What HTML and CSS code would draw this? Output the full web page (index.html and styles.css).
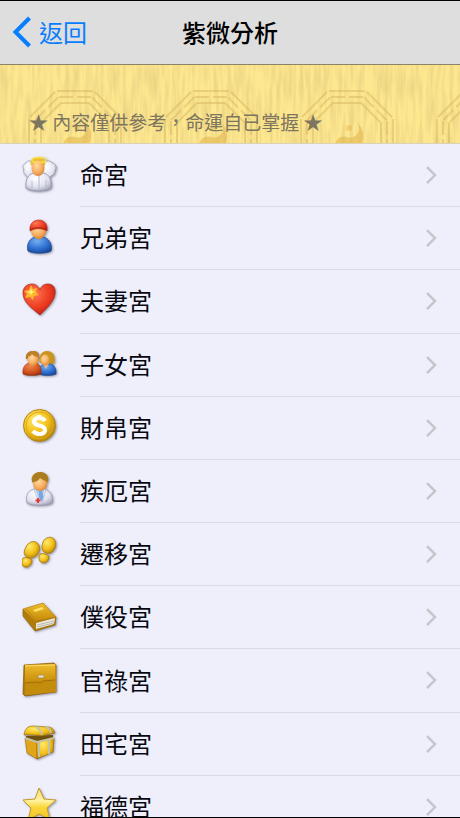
FILE: index.html
```html
<!DOCTYPE html>
<html lang="zh-Hant">
<head>
<meta charset="utf-8">
<meta name="viewport" content="width=device-width, initial-scale=1">
<title>紫微分析</title>
<link rel="stylesheet" href="styles.css">
</head>
<body>
<div class="screen">
  <header class="navbar">
    <a class="back" href="#">
      <svg class="back-arrow" viewBox="0 0 20 32" aria-hidden="true"><path d="M17.500 2 3.500 16l14 14" fill="none" stroke="currentColor" stroke-width="4"/></svg>
      <span>返回</span>
    </a>
    <h1 class="title">紫微分析</h1>
  </header>

  <div class="banner">
    <svg class="texture" aria-hidden="true">
      <defs>
        <filter id="grain" x="0" y="0" width="100%" height="100%">
          <feTurbulence type="fractalNoise" baseFrequency="0.26 0.03" numOctaves="2" seed="8"/>
          <feColorMatrix values="0 0 0 0 0.8  0 0 0 0 0.62  0 0 0 0 0.22  1.7 0 0 0 -0.62"/>
        </filter>
        <pattern id="bagua" width="136" height="160" patternUnits="userSpaceOnUse" x="7" y="-8">
          <g fill="none" stroke="#cfae55" stroke-opacity=".42" stroke-width="2" transform="translate(68 80)">
            <g id="side"><path d="M-18-46H18M-16-40H-2M2-40H16M-14-34H14"/></g>
            <use href="#side" transform="rotate(45)"/><use href="#side" transform="rotate(90)"/>
            <use href="#side" transform="rotate(135)"/><use href="#side" transform="rotate(180)"/>
            <use href="#side" transform="rotate(225)"/><use href="#side" transform="rotate(270)"/>
            <use href="#side" transform="rotate(315)"/>
            <path d="M8-16A18 18 0 0 1-8 16 9 9 0 0 1 0 0 9 9 0 0 0 8-16Z" fill="#dca83c" fill-opacity=".45" stroke="none"/>
            <circle cx="2" cy="-9" r="3" fill="#e0b040" fill-opacity=".4" stroke="none"/>
          </g>
        </pattern>
      </defs>
      <rect width="100%" height="100%" filter="url(#grain)"/>
      <rect width="100%" height="100%" fill="url(#bagua)"/>
    </svg>
    <p class="notice">★ 內容僅供參考，命運自已掌握 ★</p>
  </div>

  <svg class="defs" width="0" height="0" aria-hidden="true">
    <defs>
      <radialGradient id="skin" cx=".4" cy=".35" r=".7"><stop offset="0" stop-color="#ffd9a0"/><stop offset=".6" stop-color="#f6ae62"/><stop offset="1" stop-color="#d98432"/></radialGradient>
      <radialGradient id="white" cx=".4" cy=".3" r=".8"><stop offset="0" stop-color="#fff"/><stop offset=".6" stop-color="#e0e1ee"/><stop offset="1" stop-color="#9c9fb5"/></radialGradient>
      <radialGradient id="blue" cx=".4" cy=".25" r=".8"><stop offset="0" stop-color="#75aff0"/><stop offset=".6" stop-color="#2d6fd0"/><stop offset="1" stop-color="#164696"/></radialGradient>
      <radialGradient id="red" cx=".35" cy=".3" r=".8"><stop offset="0" stop-color="#ff7854"/><stop offset=".6" stop-color="#ec3a20"/><stop offset="1" stop-color="#b91c10"/></radialGradient>
      <radialGradient id="orange" cx=".4" cy=".25" r=".8"><stop offset="0" stop-color="#ee874c"/><stop offset=".6" stop-color="#d4541f"/><stop offset="1" stop-color="#9a3010"/></radialGradient>
      <radialGradient id="gold" cx=".35" cy=".3" r=".8"><stop offset="0" stop-color="#ffea6a"/><stop offset=".55" stop-color="#f2bf1a"/><stop offset="1" stop-color="#a97806"/></radialGradient>
      <linearGradient id="case" x1="0" y1="0" x2="0" y2="1"><stop offset="0" stop-color="#efbd2c"/><stop offset="1" stop-color="#c58a0a"/></linearGradient>
      <linearGradient id="star" x1="0" y1="0" x2="0" y2="1"><stop offset="0" stop-color="#f9dc70"/><stop offset=".4" stop-color="#fff2a0"/><stop offset=".6" stop-color="#fbd73a"/><stop offset="1" stop-color="#f2c224"/></linearGradient>
      <path id="chevron" d="M2 2l8 8-8 8" fill="none" stroke="#c5c5cb" stroke-width="2.500"/>
    </defs>
  </svg>

  <nav class="list" aria-label="紫微分析">
    <a class="row" href="#">
      <svg class="icon" viewBox="0 0 36 36" aria-hidden="true">
        <path d="M12 9C10 4 5 4 4 7c-3 1-4 4-2 6-1 3 0 5 2 6 1 4 5 5 9 5z" fill="url(#white)" stroke="#9da0b3" stroke-width=".8"/>
        <path d="M20 9c3-5 8-5 10-2 4 1 5 5 3 7 0 4-2 5-4 6-2 4-6 5-10 4z" fill="url(#white)" stroke="#9da0b3" stroke-width=".8"/>
        <path d="M4 32c-1-8 2-14 8-15h9c7 1 9 8 8 15-5 4-20 4-25 0z" fill="url(#white)" stroke="#9093a8" stroke-width=".8"/>
        <path d="M10 25v7M24 24v8M17 20v14" stroke="#b7bace" stroke-width="1"/>
        <ellipse cx="16" cy="7" rx="7.500" ry="5.500" fill="#e9c02f"/>
        <ellipse cx="16" cy="12" rx="6.500" ry="8" fill="url(#skin)"/>
        <ellipse cx="17" cy="4" rx="7" ry="2.500" fill="none" stroke="#f9df50" stroke-width="1.500"/>
      </svg>
      <span class="label">命宮</span>
      <svg class="chevron" viewBox="0 0 12 20" aria-hidden="true"><use href="#chevron"/></svg>
    </a>
    <a class="row" href="#">
      <svg class="icon" viewBox="0 0 36 36" aria-hidden="true">
        <path d="M6 32c-2-7 2-13 7-14h8c6 1 10 8 8 14-5 3-18 3-23 0z" fill="url(#blue)" stroke="#1b458c" stroke-width=".7"/>
        <path d="M13 18q4 5 8 0l-1-3h-6z" fill="#d98537"/>
        <ellipse cx="16.500" cy="12" rx="7.500" ry="7.500" fill="url(#skin)"/>
        <path d="M8 12C7 4 12 1 17 1c6 0 9 5 8 11-5-3-12-3-17 0z" fill="url(#red)" stroke="#ae2410" stroke-width=".5"/>
        <path d="M9 11c4-3 11-3 15 0" fill="none" stroke="#a52c12" stroke-width="1"/>
      </svg>
      <span class="label">兄弟宮</span>
      <svg class="chevron" viewBox="0 0 12 20" aria-hidden="true"><use href="#chevron"/></svg>
    </a>
    <a class="row" href="#">
      <svg class="icon" viewBox="0 0 36 36" aria-hidden="true">
        <path d="M18 33C11 27 1 21 1 11 1 5 5 2 10 2c4 0 7 3 8 6 1-4 4-6 8-6 5 0 8 4 7 10-1 8-9 15-15 21z" fill="url(#red)" stroke="#a82818" stroke-width=".7"/>
        <path d="M9 3l2 4 4-1-1 4 3 3-5 1-1 4-3-3-5 1 2-4-3-3 5-1z" fill="#ffb72c"/>
        <path d="M9 6l1 3 3 1-3 1-1 3-1-3-3-1 3-1z" fill="#fff07c"/>
      </svg>
      <span class="label">夫妻宮</span>
      <svg class="chevron" viewBox="0 0 12 20" aria-hidden="true"><use href="#chevron"/></svg>
    </a>
    <a class="row" href="#">
      <svg class="icon" viewBox="0 0 36 36" aria-hidden="true">
        <path d="M18 18c-2-6 1-12 7-12 7 0 9 7 7 13z" fill="#c9951d"/>
        <path d="M17 29c-1-6 2-10 6-10h5c4 0 7 5 6 10-4 2-13 2-17 0z" fill="url(#blue)" stroke="#1b458c" stroke-width=".5"/>
        <path d="M21 18l3 6 3-6z" fill="#f4b878"/>
        <ellipse cx="23" cy="15" rx="4.500" ry="5.500" fill="url(#skin)"/>
        <path d="M1 29c-1-6 2-10 6-11h7c4 1 6 6 5 11-4 2-14 2-18 0z" fill="url(#orange)" stroke="#8c3313" stroke-width=".5"/>
        <path d="M4 14c-1-5 2-8 7-8s7 3 6 8z" fill="#b1751f"/>
        <ellipse cx="11" cy="14.500" rx="5.500" ry="6.500" fill="url(#skin)"/>
        <path d="M4 12c1-4 4-6 7-6 4 0 6 2 6 6-4 0-5-1-7-3-1 2-3 3-6 3z" fill="#bd8128"/>
      </svg>
      <span class="label">子女宮</span>
      <svg class="chevron" viewBox="0 0 12 20" aria-hidden="true"><use href="#chevron"/></svg>
    </a>
    <a class="row" href="#">
      <svg class="icon" viewBox="0 0 36 36" aria-hidden="true">
        <circle cx="17.500" cy="17.500" r="16" fill="url(#gold)" stroke="#b48512" stroke-width="1"/>
        <circle cx="17.500" cy="17.500" r="13.500" fill="none" stroke="#dca716" stroke-width="1"/>
        <path d="M23 13c-2-4-10-4-11 0-1 6 11 3 11 9 0 5-9 5-12 1M17 7v4M18 25v3" fill="none" stroke="#fff" stroke-width="4"/>
      </svg>
      <span class="label">財帛宮</span>
      <svg class="chevron" viewBox="0 0 12 20" aria-hidden="true"><use href="#chevron"/></svg>
    </a>
    <a class="row" href="#">
      <svg class="icon" viewBox="0 0 36 36" aria-hidden="true">
        <path d="M5 32c-2-7 1-13 7-14h10c6 1 10 8 8 14-5 3-20 3-25 0z" fill="url(#white)" stroke="#9598ad" stroke-width=".7"/>
        <path d="M13 18l5 13 5-13z" fill="#a8cbf3"/>
        <path d="M17 20h3l2 6-2 5-3-5z" fill="#74a8e6"/>
        <path d="M12 18l5 14M24 18l-4 14" stroke="#c1c4d5" fill="none"/>
        <ellipse cx="18" cy="8" rx="8.500" ry="7" fill="#b98b28"/>
        <ellipse cx="18" cy="13" rx="7" ry="7" fill="url(#skin)"/>
        <path d="M10 11c0-7 4-10 9-10 5 1 8 4 7 10-4-1-6-3-8-4-2 3-4 4-8 4z" fill="#a97c20"/>
        <path d="M16 27v5M13.500 29.500h5" stroke="#e53a35" stroke-width="2"/>
      </svg>
      <span class="label">疾厄宮</span>
      <svg class="chevron" viewBox="0 0 12 20" aria-hidden="true"><use href="#chevron"/></svg>
    </a>
    <a class="row" href="#">
      <svg class="icon" viewBox="0 0 36 36" aria-hidden="true">
        <g fill="url(#gold)" stroke="#a97b10" stroke-width=".8">
          <path d="M22 17c-3-3-2-7-1-10 2-5 8-6 11-3 3 4 2 9-1 12-2 3-6 3-9 1z"/>
          <path d="M18 19c3-1 6 0 9 2 0 5-3 7-6 7-4-1-5-5-3-9z"/>
          <path d="M5 22c-4-2-3-7-1-10 2-5 8-7 11-4 4 3 3 9 0 12s-7 4-10 2z"/>
          <path d="M1 23c3-1 7 0 9 2 0 5-4 8-7 7-3 0-4-5-2-9z"/>
        </g>
      </svg>
      <span class="label">遷移宮</span>
      <svg class="chevron" viewBox="0 0 12 20" aria-hidden="true"><use href="#chevron"/></svg>
    </a>
    <a class="row" href="#">
      <svg class="icon" viewBox="0 0 36 36" aria-hidden="true">
        <path d="M1 11l12 12 21-4-1 8-20 6L1 18z" fill="#b27c0b" stroke="#8f640c" stroke-width=".7"/>
        <path d="M14 25l19-5-1 6-18 5z" fill="#e9e7dc"/>
        <path d="M15 27l17-4M15 29l17-4" stroke="#a9a79e" stroke-width=".7"/>
        <path d="M1 11L21 5l13 14-21 4z" fill="url(#case)" stroke="#b98410" stroke-width=".7"/>
        <path d="M4 11l10 11" stroke="#b98410"/>
        <path d="M11 12l9-3 2 2-9 3z" fill="#ffe16b"/>
      </svg>
      <span class="label">僕役宮</span>
      <svg class="chevron" viewBox="0 0 12 20" aria-hidden="true"><use href="#chevron"/></svg>
    </a>
    <a class="row" href="#">
      <svg class="icon" viewBox="0 0 36 36" aria-hidden="true">
        <path d="M2 4l30-2 2 2v27L3 35l-2-2z" fill="#b37b09" stroke="#8a5f0b" stroke-width=".7"/>
        <path d="M4 4l30-1v28L3 34z" fill="#c48c0d"/>
        <path d="M3 4l30-1v16l-12 1-3 2-3-1-12 1z" fill="url(#case)"/>
        <path d="M3 22l12-1 3 1 3-2 12-1" fill="none" stroke="#a26f0a" stroke-width="1"/>
        <path d="M3 5l30-1" stroke="#f8da68"/>
        <rect x="16" y="14" width="6" height="3" rx="1" fill="#e1dfc8" stroke="#8e7735" stroke-width=".5"/>
      </svg>
      <span class="label">官祿宮</span>
      <svg class="chevron" viewBox="0 0 12 20" aria-hidden="true"><use href="#chevron"/></svg>
    </a>
    <a class="row" href="#">
      <svg class="icon" viewBox="0 0 36 36" aria-hidden="true">
        <path d="M4 12l27-1v7L4 20z" fill="#6d500f"/>
        <path d="M3 14l12 4v17L5 29z" fill="#e0a51b" stroke="#946a0e" stroke-width=".6"/>
        <path d="M15 18l17-4-1 14-16 7z" fill="url(#gold)" stroke="#946a0e" stroke-width=".6"/>
        <path d="M2 11C3 4 6 2 11 2l15 1c4 0 6 3 7 6l-13 3-10-1z" fill="url(#gold)" stroke="#946a0e" stroke-width=".6"/>
        <path d="M14 3c3 1 5 4 6 8M24 3c3 1 4 3 5 6M17 18v15M27 16v14M3 14l12 4 17-4" fill="none" stroke="#c3c1a8" stroke-width="2"/>
      </svg>
      <span class="label">田宅宮</span>
      <svg class="chevron" viewBox="0 0 12 20" aria-hidden="true"><use href="#chevron"/></svg>
    </a>
    <a class="row" href="#">
      <svg class="icon" viewBox="0 0 36 36" aria-hidden="true">
        <path d="M17 1l5 11 12 1-9 8 3 12-11-6-11 6 3-12-8-8 12-1z" fill="url(#star)" stroke="#c39a2c" stroke-width="1" stroke-linejoin="round"/>
      </svg>
      <span class="label">福德宮</span>
      <svg class="chevron" viewBox="0 0 12 20" aria-hidden="true"><use href="#chevron"/></svg>
    </a>
  </nav>
</div>
</body>
</html>
```
FILE: styles.css
```css
* {
  box-sizing: border-box;
}

body {
  margin: 0;
  background: #efeffb;
  color: #080810;
  font-family: "Noto Sans CJK TC", sans-serif;
}

a {
  color: inherit;
  text-decoration: none;
}

.screen {
  height: 100vh;
  overflow: hidden;
  border-top: 1px solid #000;
  border-bottom: 1px solid #000;
}

.defs {
  display: block;
}

.navbar {
  display: grid;
  grid-template-columns: 1fr auto 1fr;
  align-items: center;
  height: 64px;
  padding: 0 12px 2px;
  background: #dedede;
  border-bottom: 1px solid #8c8268;
}

.back {
  display: flex;
  align-items: center;
  gap: 7px;
  color: #087dff;
  font-size: 24px;
  line-height: 32px;
}

.back-arrow {
  width: 20px;
  height: 32px;
}

.title {
  margin: 0;
  color: #000;
  font-size: 24px;
  font-weight: 500;
  line-height: 32px;
}

.banner {
  position: relative;
  padding: 44px 29px 8px;
  background: #fde78f;
  border-bottom: 1px solid #ddd3b4;
}

.texture {
  position: absolute;
  inset: 0;
  width: 100%;
  height: 100%;
}

.notice {
  position: relative;
  margin: 0;
  color: #7d755f;
  font-size: 19px;
  line-height: 26px;
}

.list {
  display: grid;
  grid-template-rows: repeat(11, 1fr);
  min-height: 695px;
}

.row {
  display: flex;
  align-items: center;
  padding-left: 22px;
}

.icon {
  width: 36px;
  height: 36px;
  margin: 0 22px 4px 0;
  flex: none;
  filter: drop-shadow(1px 1px 1px rgba(60, 60, 80, 0.5));
}

.label {
  flex: 1;
  align-self: stretch;
  display: flex;
  align-items: center;
  padding-bottom: 2px;
  border-bottom: 1px solid #dadae4;
  font-size: 24px;
  line-height: 32px;
}

.chevron {
  box-sizing: content-box;
  align-self: stretch;
  width: 12px;
  padding-right: 23px;
  border-bottom: 1px solid #dadae4;
}
```
